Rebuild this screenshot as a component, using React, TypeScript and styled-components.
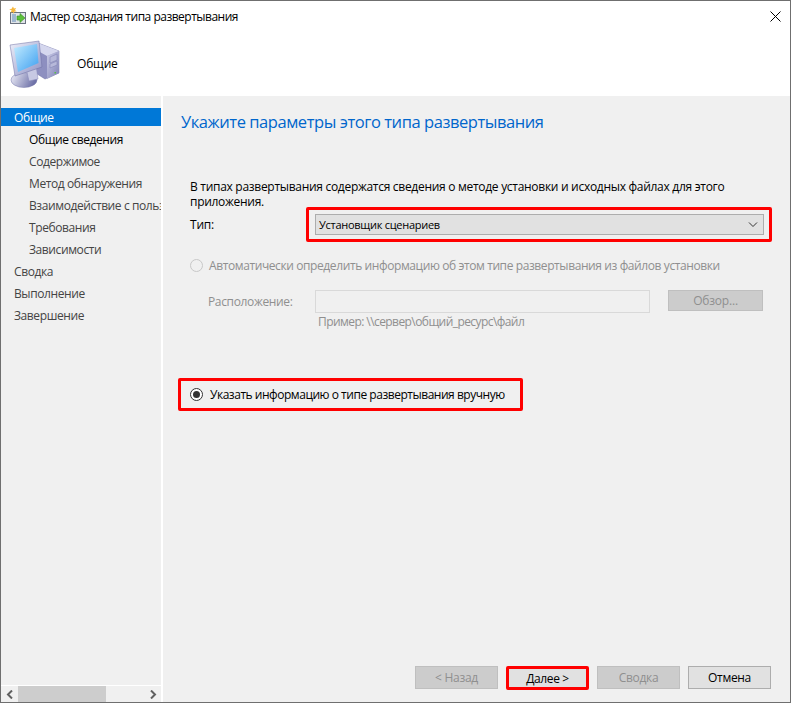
import React from "react";
import styled, { createGlobalStyle } from "styled-components";

const Global = createGlobalStyle`
  html, body { margin: 0; padding: 0; background: #f0f0f0; }
  body { font-family: "Open Sans", "Noto Sans", sans-serif; font-size: 12px; }
  * { box-sizing: border-box; }
`;

const Window = styled.div`
  width: 791px; height: 703px; display: flex; flex-direction: column;
  border: 1px solid #6f6f6f; background: #fff; overflow: hidden;
`;
const TitleBar = styled.div`
  height: 30px; display: flex; align-items: center; padding-left: 7px; gap: 2px; flex: none; background: #fff; color: #000;
  font-size: 12px; letter-spacing: -0.5px;
`;
const CloseBtn = styled.div`
  margin-left: auto; width: 30px; height: 30px; display: flex; align-items: center; justify-content: center;
`;
const Header = styled.div`
  height: 65px; flex: none; display: flex; align-items: center; padding-left: 8px; gap: 16px; background: #fff; font-size: 12px; letter-spacing: -0.2px;
`;
const Body = styled.div`flex: 1; display: flex; min-height: 0; background: #f0f0f0;`;
const Sidebar = styled.div`
  width: 160px; flex: none; display: flex; flex-direction: column; background: #f0f0f0;
`;
const NavList = styled.div`flex: 1; padding-top: 12px; overflow: hidden;`;
const NavItem = styled.div<{ $sel?: boolean; $sub?: boolean; $cur?: boolean }>`
  height: 22px; padding: 2px 0 0 ${p => (p.$sub ? 28 : 13)}px; white-space: nowrap; overflow: hidden; letter-spacing: -0.4px; line-height: 16px;
  color: ${p => (p.$cur ? "#000" : "#444")};
  ${p => p.$sel && "background: #0078d7; color: #fff; height: 18px; margin-bottom: 4px; padding-top: 2px;"}
`;
const HScroll = styled.div`
  flex: none; display: flex; align-items: stretch; border-top: 1px solid #fff; background: #f0f0f0; height: 17px;
`;
const ScrollBtn = styled.div`width: 17px; display: flex; align-items: center; justify-content: center; flex: none;`;
const ScrollTrack = styled.div`flex: 1; display: flex;`;
const ScrollThumb = styled.div`width: 88px; background: #cdcdcd;`;
const Divider = styled.div`width: 2px; flex: none; background: #fff;`;
const Main = styled.div`flex: 1; display: flex; flex-direction: column; min-width: 0; padding-left: 18px; background: #f0f0f0;`;
const Heading = styled.div`
  margin-top: 14px; font-size: 16.5px; line-height: 24px; color: #0066cc; letter-spacing: -0.44px;
`;
const Description = styled.div`
  margin-top: 45px; padding-left: 9px; width: 570px; line-height: 15px; color: #000; letter-spacing: -0.29px;
`;
const TypeRow = styled.div`
  display: flex; align-items: center; margin-top: -2px; padding-left: 9px; letter-spacing: -0.2px; color: #000;
`;
const TypeLabel = styled.div`width: 116px;`;
const Highlight = styled.div`
  border: 3px solid #ff0000; border-radius: 2px;
`;
const SelectHL = styled(Highlight)`
  width: 466px; height: 35px; padding: 4px 5px 5px 6px;
`;
const Select = styled.div`
  height: 21px; width: 449px; background: #e1e1e1; border: 1px solid #adadad; display: flex; align-items: center; padding: 0 5px 0 3px; justify-content: space-between;
  font-size: 11px; letter-spacing: -0.27px;
`;
const RadioRow = styled.div<{ $disabled?: boolean }>`
  display: flex; align-items: center; gap: 7px; letter-spacing: -0.47px;
  color: ${p => (p.$disabled ? "#8f8f8f" : "#000")};
`;
const AutoRow = styled(RadioRow)`margin-top: 14px; padding-left: 9px; height: 18px; gap: 6px; letter-spacing: -0.4px;`;
const RadioMark = styled.span<{ $on?: boolean; $disabled?: boolean }>`
  width: 13px; height: 13px; border-radius: 50%; flex: none; display: flex; align-items: center; justify-content: center; background: #fff;
  border: 1px solid ${p => (p.$disabled ? "#c8c8c8" : "#333")};
  ${p => p.$disabled && "background: #f0f0f0;"}
  &::after { content: ""; display: ${p => (p.$on ? "block" : "none")}; width: 7px; height: 7px; border-radius: 50%; background: #333; }
`;
const LocationRow = styled.div`
  display: flex; align-items: center; margin-top: 16px; padding-left: 27px; color: #8f8f8f; letter-spacing: -0.35px;
`;
const LocationLabel = styled.div`width: 107px;`;
const LocationInput = styled.div`width: 335px; height: 23px; background: #f0f0f0; border: 1px solid #d9d9d9;`;
const BrowseBtn = styled.div`
  margin-left: 18px; width: 95px; height: 21px; margin-top: -2px; background: #cccccc; border: 1px solid #bfbfbf; color: #8f8f8f; display: flex; align-items: center; justify-content: center;
  letter-spacing: -0.2px;
`;
const Hint = styled.div`margin-top: 1px; padding-left: 137px; color: #8f8f8f; line-height: 16px; letter-spacing: -0.57px;`;
const ManualHL = styled(Highlight)`
  margin-top: 48px; margin-left: -3px; width: 345px; height: 33px; display: flex; align-items: center; padding-left: 9px;
`;
const Footer = styled.div`
  margin-top: auto; height: 36px; flex: none; display: flex; align-items: flex-start; padding-left: 234px;
`;
const Btn = styled.div<{ $disabled?: boolean }>`
  width: 83px; height: 23px; display: flex; align-items: center; justify-content: center; letter-spacing: -0.3px;
  background: ${p => (p.$disabled ? "#cccccc" : "#e1e1e1")};
  border: 1px solid ${p => (p.$disabled ? "#bfbfbf" : "#adadad")};
  color: ${p => (p.$disabled ? "#8f8f8f" : "#000")};
`;
const NextHL = styled(Highlight)`
  width: 83px; height: 24px; margin: 0 8px; background: #e1e1e1; display: flex; align-items: center; justify-content: center; letter-spacing: -0.35px; color: #000;
`;
const CancelBtn = styled(Btn)`margin-left: 8px;`;

const WizardIcon = () => (
  <svg width="20" height="20" viewBox="0 0 20 20">
    <rect x="2.5" y="6.500" width="15" height="11" fill="#dfe3e8" stroke="#6b7280" />
    <rect x="4" y="8" width="4" height="8" fill="#9fb7d0" />
    <path d="M9 10h3V7.500l5 4.500-5 4.500V14H9z" fill="#5cc03c" stroke="#3a8f22" strokeWidth="0.6" />
    <path d="M5 0.500l.9 2.100 2.200-.6-1.100 2 1.700 1.400-2.300.2-.5 2.200-1.200-1.900-2.200.6 1.200-1.900L1.100 3l2.300-.1z" fill="#f6b73c" />
  </svg>
);

const ComputerIcon = () => (
  <svg width="52" height="52" viewBox="9 38 52 52">
    <defs>
      <linearGradient id="scr" x1="0" y1="0" x2="1" y2="1">
        <stop offset="0" stopColor="#c4ecff" />
        <stop offset="1" stopColor="#3c9ff0" />
      </linearGradient>
      <linearGradient id="frm" x1="0" y1="0" x2="1" y2="1">
        <stop offset="0" stopColor="#eef0fa" />
        <stop offset="1" stopColor="#8f92c4" />
      </linearGradient>
      <linearGradient id="foot" x1="0" y1="0" x2="1" y2="0.300">
        <stop offset="0" stopColor="#f0f1fa" />
        <stop offset="1" stopColor="#6f72a8" />
      </linearGradient>
      <linearGradient id="twr" x1="0" y1="0" x2="1" y2="1">
        <stop offset="0" stopColor="#c9cbe6" />
        <stop offset="1" stopColor="#8082b6" />
      </linearGradient>
    </defs>
    <path d="M38 43l21 8v22l-14 6-11-7z" fill="#8d8fc0" stroke="#6d6fa3" strokeWidth="0.5" />
    <path d="M47 56l12-5v22l-12 6z" fill="url(#twr)" />
    <path d="M38 43l21 8-12 5-9-5z" fill="#d5d7ee" />
    <path d="M50 57l7-3v6l-7 3zM50 64l7-3v4l-7 3z" fill="#b7b9da" stroke="#7d7fb0" strokeWidth="0.5" />
    <rect x="54.500" y="72" width="1.500" height="1.500" fill="#59c046" />
    <ellipse cx="24" cy="80" rx="13" ry="7.500" fill="url(#foot)" stroke="#7779ab" strokeWidth="0.5" />
    <path d="M26 68l10-3 2 14-9 2z" fill="#c7c9e3" stroke="#8486b8" strokeWidth="0.5" />
    <path d="M10 45l29-4 3 26-27 9z" fill="url(#frm)" stroke="#6d6fa3" strokeWidth="0.5" />
    <path d="M14 48l23-4 1.500 19L18 72z" fill="url(#scr)" />
  </svg>
);

const Chevron = () => (
  <svg width="10" height="6" viewBox="0 0 10 6"><path d="M1 .5l4 4 4-4" fill="none" stroke="#333" strokeWidth="1" /></svg>
);
const ArrowL = () => (
  <svg width="8" height="9" viewBox="0 0 8 9"><path d="M6 0.500L2 4.500l4 4" fill="none" stroke="#606060" strokeWidth="2" /></svg>
);
const ArrowR = () => (
  <svg width="8" height="9" viewBox="0 0 8 9"><path d="M2 0.500l4 4-4 4" fill="none" stroke="#606060" strokeWidth="2" /></svg>
);
const CloseIcon = () => (
  <svg width="11" height="11" viewBox="0 0 11 11"><path d="M0.500 0.500l10 10M10.500 0.500l-10 10" stroke="#000" strokeWidth="1" /></svg>
);

export default function App() {
  return (
    <>
      <Global />
      <Window>
        <TitleBar>
          <WizardIcon />
          <span>Мастер создания типа развертывания</span>
          <CloseBtn><CloseIcon /></CloseBtn>
        </TitleBar>
        <Header>
          <ComputerIcon />
          <span>Общие</span>
        </Header>
        <Body>
          <Sidebar>
            <NavList>
              <NavItem $sel>Общие</NavItem>
              <NavItem $sub $cur>Общие сведения</NavItem>
              <NavItem $sub>Содержимое</NavItem>
              <NavItem $sub>Метод обнаружения</NavItem>
              <NavItem $sub>Взаимодействие с польз</NavItem>
              <NavItem $sub>Требования</NavItem>
              <NavItem $sub>Зависимости</NavItem>
              <NavItem>Сводка</NavItem>
              <NavItem>Выполнение</NavItem>
              <NavItem>Завершение</NavItem>
            </NavList>
            <HScroll>
              <ScrollBtn><ArrowL /></ScrollBtn>
              <ScrollTrack><ScrollThumb /></ScrollTrack>
              <ScrollBtn><ArrowR /></ScrollBtn>
            </HScroll>
          </Sidebar>
          <Divider />
          <Main>
            <Heading>Укажите параметры этого типа развертывания</Heading>
            <Description>В типах развертывания содержатся сведения о методе установки и исходных файлах для этого приложения.</Description>
            <TypeRow>
              <TypeLabel>Тип:</TypeLabel>
              <SelectHL>
                <Select><span>Установщик сценариев</span><Chevron /></Select>
              </SelectHL>
            </TypeRow>
            <AutoRow $disabled>
              <RadioMark $disabled />
              <span>Автоматически определить информацию об этом типе развертывания из файлов установки</span>
            </AutoRow>
            <LocationRow>
              <LocationLabel>Расположение:</LocationLabel>
              <LocationInput />
              <BrowseBtn>Обзор...</BrowseBtn>
            </LocationRow>
            <Hint>Пример: \\сервер\общий_ресурс\файл</Hint>
            <ManualHL>
              <RadioRow>
                <RadioMark $on />
                <span>Указать информацию о типе развертывания вручную</span>
              </RadioRow>
            </ManualHL>
            <Footer>
              <Btn $disabled>&lt; Назад</Btn>
              <NextHL>Далее &gt;</NextHL>
              <Btn $disabled>Сводка</Btn>
              <CancelBtn>Отмена</CancelBtn>
            </Footer>
          </Main>
        </Body>
      </Window>
    </>
  );
}
